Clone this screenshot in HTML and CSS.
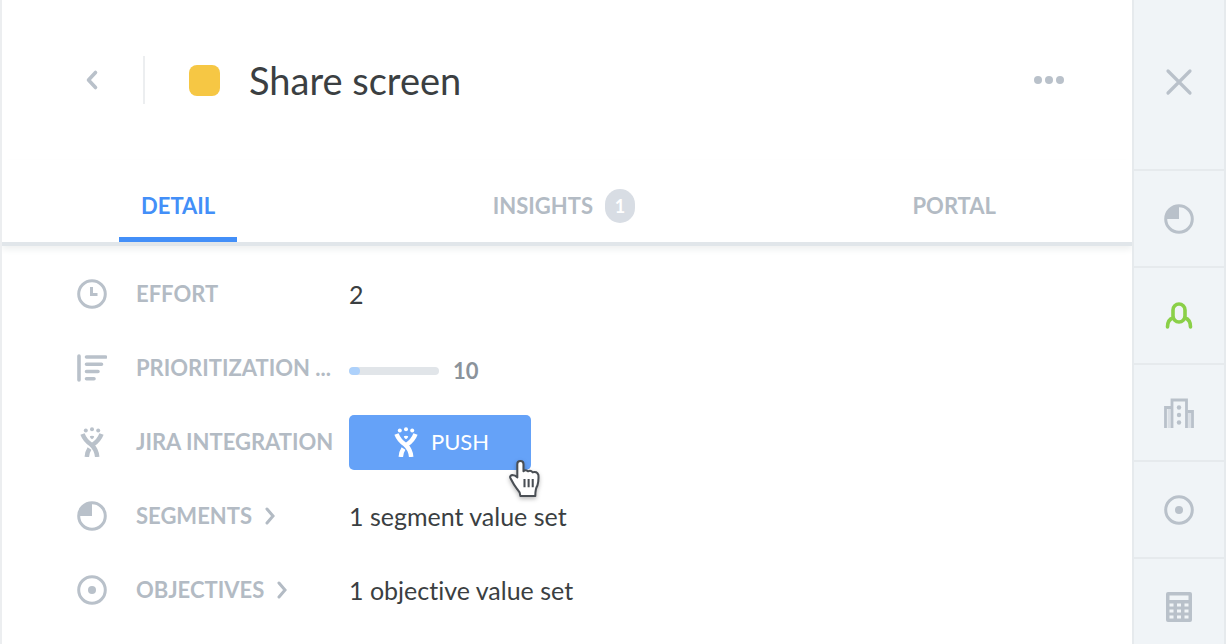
FILE: index.html
```html
<!DOCTYPE html>
<html lang="en">
<head>
<meta charset="utf-8">
<meta name="viewport" content="width=device-width, initial-scale=1">
<title>Share screen</title>
<link rel="stylesheet" href="styles.css">
</head>
<body>
<svg class="defs" aria-hidden="true">
  <symbol id="pie" viewBox="0 0 30 30"><circle cx="15" cy="15" r="13.3" fill="none" stroke="currentColor" stroke-width="3"/><path d="M15 2v13H2C2 8 7 2 15 2z" fill="currentColor"/></symbol>
  <symbol id="target" viewBox="0 0 30 30"><circle cx="15" cy="15" r="13.3" fill="none" stroke="currentColor" stroke-width="3"/><circle cx="15" cy="15" r="4" fill="currentColor"/></symbol>
  <symbol id="jira" viewBox="0 0 30 30"><g fill="currentColor"><circle cx="8.800" cy="3.600" r="2"/><circle cx="15" cy="2.200" r="2"/><circle cx="21.200" cy="3.600" r="2"/><path d="M12.800 9.300Q15 8.300 17.200 9.300Q17 11.500 15 12.300Q13 11.500 12.800 9.300z"/></g><g fill="none" stroke="currentColor" stroke-width="4.500"><path d="M5.500 7Q8 13.500 14 17.500Q19.500 22 20.200 30"/><path d="M24.500 7Q22 13.500 16 17.500"/><path d="M12.500 21.500Q10.200 25 9.800 30"/></g></symbol>
</svg>
<div class="app">
  <main class="panel">
    <header class="header">
      <button class="icon-button back" aria-label="Back"><svg width="14" height="22" viewBox="0 0 14 22"><path d="M10.500 3.500L3.500 11L10.500 18.500" fill="none" stroke="currentColor" stroke-width="3.600" stroke-linecap="round" stroke-linejoin="round"/></svg></button>
      <span class="swatch"></span>
      <h1 class="title">Share screen</h1>
      <button class="icon-button more" aria-label="More options"><svg width="30" height="8" viewBox="0 0 30 8" fill="currentColor"><circle cx="4" cy="4" r="4"/><circle cx="15" cy="4" r="4"/><circle cx="26" cy="4" r="4"/></svg></button>
    </header>
    <nav class="tabs">
      <button class="tab tab-active">DETAIL</button>
      <button class="tab">INSIGHTS <span class="badge">1</span></button>
      <button class="tab">PORTAL</button>
    </nav>
    <section class="rows">
      <div class="row">
        <svg class="icon" viewBox="0 0 30 30" fill="none" stroke="currentColor" stroke-width="3"><circle cx="15" cy="15" r="13.300"/><path d="M14.500 8V15.500H20.500"/></svg>
        <span class="label">EFFORT</span>
        <span class="value">2</span>
      </div>
      <div class="row">
        <svg class="icon" viewBox="0 0 30 30" fill="none" stroke="currentColor" stroke-width="3.600" stroke-linecap="round"><path d="M2 3V27M9.500 4H28.500M9.500 11.200H24.500M9.500 18.500H21M9.500 25.800H17"/></svg>
        <span class="label" id="priority">PRIORITIZATION ...</span>
        <span class="value score"><progress class="meter" value="12" max="100" aria-labelledby="priority"></progress><b class="number">10</b></span>
      </div>
      <div class="row">
        <svg class="icon"><use href="#jira"/></svg>
        <span class="label">JIRA INTEGRATION</span>
        <button class="push"><svg class="icon"><use href="#jira"/></svg>PUSH
          <svg class="pointer" viewBox="0 0 30 36" aria-hidden="true"><path d="M8 4Q8 1 11 1Q14 1 14 4V11Q15.500 9 18.500 11Q21 9.500 23 12Q27 10.500 28.500 14.500Q29 20 27.500 25Q25.500 28 25.500 35H11Q11 31.500 8 28.500Q4.500 24 1.500 18Q0 15.500 3 14.500Q6 14.500 8 17z" fill="#fff" stroke="#4a4f55" stroke-width="2" stroke-linejoin="round"/><path d="M15 18.500V26.500M19 18.500V26.500M23 18.500V26.500" stroke="#4a4f55" stroke-width="2"/></svg>
        </button>
      </div>
      <div class="row">
        <svg class="icon"><use href="#pie"/></svg>
        <button class="label expand">SEGMENTS <svg class="chevron" viewBox="0 0 12 18"><path d="M3 2L9 9L3 16"/></svg></button>
        <span class="value">1 segment value set</span>
      </div>
      <div class="row">
        <svg class="icon"><use href="#target"/></svg>
        <button class="label expand">OBJECTIVES <svg class="chevron" viewBox="0 0 12 18"><path d="M3 2L9 9L3 16"/></svg></button>
        <span class="value">1 objective value set</span>
      </div>
    </section>
  </main>
  <aside class="rail">
    <button class="rail-item rail-close" aria-label="Close"><svg class="icon" viewBox="0 0 30 30"><path d="M4 4L26 26M26 4L4 26" stroke="currentColor" stroke-width="3.200" stroke-linecap="round"/></svg></button>
    <button class="rail-item" aria-label="Segments"><svg class="icon"><use href="#pie"/></svg></button>
    <button class="rail-item rail-user" aria-label="Users"><svg class="icon" viewBox="0 0 30 30" fill="none" stroke="currentColor" stroke-width="3.600" stroke-linecap="round"><rect x="9" y="3" width="12" height="18" rx="6"/><path d="M9 17Q3.500 18.500 3.500 26M21 17Q26.500 18.500 26.500 26"/></svg></button>
    <button class="rail-item" aria-label="Companies"><svg class="icon" viewBox="0 0 30 30" fill="none" stroke="currentColor" stroke-width="2.800"><path d="M8 30V2H22.500V30"/><path d="M1.500 30V9.500H7M23.500 13.500H28.500V30"/><path d="M5 10V30M25.500 14V30" stroke-opacity=".4"/><g fill="currentColor" stroke="none"><circle cx="15" cy="9.500" r="2.200"/><circle cx="15" cy="17" r="2.200"/><circle cx="15" cy="24.500" r="2.200"/></g></svg></button>
    <button class="rail-item" aria-label="Objectives"><svg class="icon"><use href="#target"/></svg></button>
    <button class="rail-item" aria-label="Calculator"><svg class="icon" viewBox="0 0 30 30"><path fill="currentColor" fill-rule="evenodd" d="M4 0H26Q28 0 28 2V28Q28 30 26 30H4Q2 30 2 28V2Q2 0 4 0zM5.500 3.500V8H24.500V3.500zM5.500 11.500V14.500H9.500V11.500zM13 11.500V14.500H17V11.500zM20.500 11.500V14.500H24.500V11.500zM5.500 17.500V20.500H9.500V17.500zM13 17.500V20.500H17V17.500zM20.500 17.500V20.500H24.500V17.500zM5.500 23.500V26.500H9.500V23.500zM13 23.500V26.500H17V23.500zM20.500 23.500V26.500H24.500V23.500z"/></svg></button>
  </aside>
</div>
</body>
</html>
```
FILE: styles.css
```css
* { box-sizing: border-box; }
body {
  margin: 0;
  background: #fff;
  color: #3b3f42;
  font: 25px/30px Lato, "Open Sans", sans-serif;
  font-variant-ligatures: none;
}
button {
  margin: 0;
  padding: 0;
  border: 0;
  background: none;
  color: inherit;
  font: inherit;
  cursor: pointer;
}
svg { display: block; flex: none; }
.defs { position: absolute; width: 0; height: 0; }
.app {
  display: flex;
  height: 100vh;
  overflow: hidden;
  border-left: 2px solid #eceef0;
}
.panel { flex: 1; min-width: 0; }
.header {
  display: flex;
  align-items: center;
  height: 160px;
  padding: 0 68px 0 83px;
}
.icon-button { color: #b9c1ca; }
.back {
  display: flex;
  align-items: center;
  height: 48px;
  width: 60px;
  border-right: 2px solid #eceef0;
}
.swatch {
  width: 31px;
  height: 31px;
  margin-left: 44px;
  border-radius: 8px;
  background: #f6c744;
}
.title {
  flex: 1;
  margin: 0 0 0 29px;
  font-size: 38px;
  line-height: 48px;
  font-weight: 400;
}
.tabs {
  display: flex;
  justify-content: space-between;
  height: 86px;
  padding: 9px 114px 0 117px;
  border-bottom: 4px solid #e1e6ea;
  box-shadow: 0 4px 6px #f0f2f2;
}
.tab {
  display: flex;
  align-items: center;
  gap: 12px;
  padding: 5px 22px 0;
  border-bottom: 5px solid transparent;
  color: #b3bbc4;
  font-size: 22px;
  font-weight: 700;
}
.tab-active { border-color: #438ff8; color: #438ff8; }
.badge {
  width: 30px;
  border-radius: 16px;
  background: #d8dde4;
  color: #fff;
  font-size: 18px;
  line-height: 34px;
}
.rows { padding: 11px 40px 0 75px; }
.row {
  display: grid;
  grid-template-columns: 30px 184px 1fr;
  column-gap: 29px;
  align-items: center;
  height: 74px;
}
.icon { width: 30px; height: 30px; color: #b9c1ca; }
.label {
  color: #b3bbc4;
  font-size: 22px;
  font-weight: 700;
  white-space: nowrap;
}
.expand { display: flex; align-items: center; gap: 12px; }
.chevron { width: 12px; height: 18px; }
.chevron path {
  fill: none;
  stroke: currentColor;
  stroke-width: 3;
  stroke-linecap: round;
}
.score { display: flex; align-items: center; gap: 14px; padding-top: 6px; }
.meter {
  appearance: none;
  width: 90px;
  height: 8px;
  border: 0;
  border-radius: 4px;
  overflow: hidden;
}
.meter::-webkit-progress-bar { background: #e1e5e9; }
.meter::-webkit-progress-value { border-radius: 4px; background: #add1fb; }
.number { color: #8b939b; font-size: 22px; }
.push {
  position: relative;
  display: flex;
  align-items: center;
  justify-content: center;
  gap: 10px;
  width: 182px;
  height: 55px;
  border-radius: 5px;
  background: #65a2f8;
  color: #fff;
  font-size: 22px;
}
.push .icon { color: #fff; }
.pointer {
  position: absolute;
  right: -9px;
  bottom: -27px;
  width: 31px;
  height: 37px;
  overflow: visible;
  filter: drop-shadow(0 2px 2px #0004);
}
.rail {
  width: 94px;
  flex: none;
  overflow: hidden;
  border: 2px solid #e6eaed;
  border-width: 0 2px;
  background: #f0f4f7;
}
.rail-item {
  display: grid;
  place-items: center;
  width: 100%;
  height: 97px;
  border-bottom: 2px solid #e6eaed;
}
.rail-close { height: 171px; padding-bottom: 6px; }
.rail-user .icon { color: #8bd048; }
```
